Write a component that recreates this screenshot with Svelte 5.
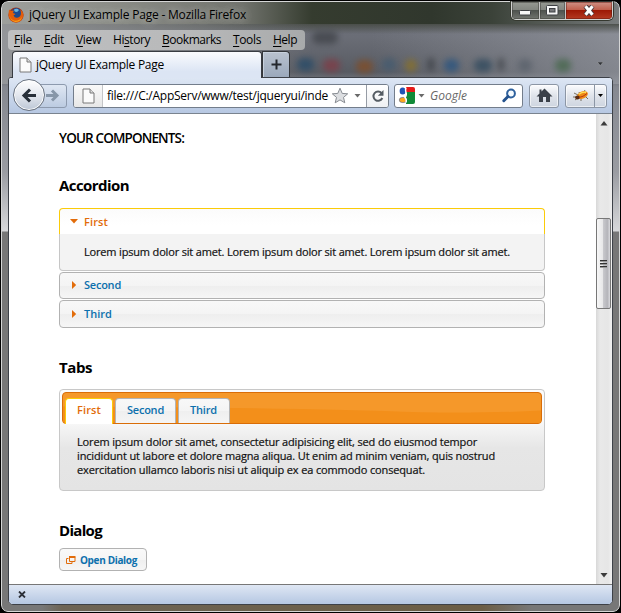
<script>
  function fit(node, width) {
    const n = node.textContent.length;
    node.style.letterSpacing = '0px';
    const natural = node.getBoundingClientRect().width;
    node.style.letterSpacing = `${(width - natural) / n}px`;
  }

  const menu = [
    ['F', 'ile', 18], ['E', 'dit', 20], ['V', 'iew', 25], ['Hi', 'story', 37],
    ['B', 'ookmarks', 59], ['T', 'ools', 28], ['H', 'elp', 24]
  ];
  const blobs = [
    [295, 63, 17, '#2c4c68'], [321, 64, 17, '#7c3f49'], [354, 65, 17, '#7d4e2c'],
    [380, 63, 14, '#465c70'], [403, 64, 12, '#86702f'], [426, 63, 6, '#3c4046'],
    [442, 64, 15, '#2f567f'], [472, 64, 18, '#364d60'], [496, 63, 6, '#44484e'],
    [516, 64, 14, '#5c636d'], [553, 64, 16, '#4b6951'], [310, 36, 26, '#44474d']
  ];
  const lines = [
    ['Lorem ipsum dolor sit amet, consectetur adipisicing elit, sed do eiusmod tempor', 400],
    ['incididunt ut labore et dolore magna aliqua. Ut enim ad minim veniam, quis nostrud', 418],
    ['exercitation ullamco laboris nisi ut aliquip ex ea commodo consequat.', 348]
  ];
  let open = 0;
</script>

<div class="window">
  <div class="glass">
    {#each blobs as [x, y, w, c]}
      <i class="blob" style="left:{x}px;top:{y - 7}px;width:{w}px;background:{c}"></i>
    {/each}
  </div>

  <header class="title">
    <svg class="fox" width="16" height="16" viewBox="0 0 16 16">
      <circle cx="8" cy="8" r="7.6" fill="#a93210" />
      <circle cx="8.4" cy="6.6" r="5.6" fill="#1d4b91" />
      <path d="M6 2.500q3-1.600 5 .4q-1 2-3 2q-2 0-2-2.400z" fill="#69b4e0" />
      <path d="M1 2.500L3 4q1.500-.7 3-.3L4.800 6q2 .3 2.600 1.300L5.500 8.500q1 2.500 3.600 2.200Q13 10 13 6L12.300 2.500Q16 5.500 15.300 9.500Q13.500 15.500 8 15.400Q1.500 15 .8 9Q.5 5.500 1 2.500z" fill="#e35d0b" />
      <path d="M1.500 8q1 4.500 5 5.700q5 .8 7.500-4.200q-1 5.500-6.500 5.400Q2 13.500 1.500 8z" fill="#f8a51b" />
    </svg>
    <span class="caption"><span use:fit={217}>jQuery UI Example Page - Mozilla Firefox</span></span>
    <div class="controls">
      <span class="ctl min"><svg width="12" height="6" viewBox="0 0 12 6"><rect x=".5" y=".5" width="11" height="4.500" rx="1" fill="#f6f6f6" stroke="#3e4044" /></svg></span>
      <span class="ctl max"><svg width="13" height="11" viewBox="0 0 13 11"><rect x=".5" y=".5" width="11.500" height="9.500" rx="1" fill="#f6f6f6" stroke="#3e4044" /><rect x="3.500" y="3.500" width="5.500" height="3.500" fill="#77787b" stroke="#3e4044" /></svg></span>
      <span class="ctl close"><svg width="14" height="11" viewBox="0 0 14 11"><path d="M3.500 1L10.500 10M10.500 1L3.500 10" stroke="#4b3a3e" stroke-width="5" /><path d="M3.500 1.200L10.500 9.800M10.500 1.200L3.500 9.800" stroke="#fff" stroke-width="3" /></svg></span>
    </div>
  </header>

  <nav class="menu">
    {#each menu as [a, b, w]}
      <span class="item" style="width:{w}px"><span use:fit={w}>{#if a.length > 1}{a}<u>{b[0]}</u>{b.slice(1)}{:else}<u>{a}</u>{b}{/if}</span></span>
    {/each}
  </nav>

  <div class="tabstrip">
    <div class="tab">
      <svg width="13" height="16" viewBox="0 0 13 16"><path d="M1 1h7l4 4v10H1z" fill="#fbfbfb" stroke="#797979" /><path d="M8 1v4h4" fill="#ddd" stroke="#797979" /></svg>
      <span use:fit={128}>jQuery UI Example Page</span>
    </div>
    <div class="plus"><svg width="11" height="11" viewBox="0 0 11 11"><path d="M5.500 .5v10M.5 5.500h10" stroke="#24282e" stroke-width="2" /></svg></div>
    <svg class="alltabs" width="7" height="4" viewBox="0 0 7 4"><path d="M.3 0h6L3.300 3.600z" fill="#303338" stroke="#aaa" stroke-width=".5" /></svg>
  </div>

  <div class="frame">
    <div class="toolbar">
      <div class="history">
        <div class="fwd"><svg width="14" height="13" viewBox="0 0 14 13"><path d="M0 6.500h10M6 1.500L11 6.500L6 11.500" fill="none" stroke="#8796a8" stroke-width="3" /></svg></div>
        <div class="back"><svg width="16" height="15" viewBox="0 0 16 15"><path d="M15 7.500H4M9 1.500L3 7.500L9 13.500" fill="none" stroke="#272f39" stroke-width="3.100" /></svg></div>
      </div>
      <div class="url">
        <div class="ident"><svg width="13" height="16" viewBox="0 0 13 16"><path d="M1 1h7l4 4v10H1z" fill="#fbfbfb" stroke="#797979" /><path d="M8 1v4h4" fill="#ddd" stroke="#797979" /></svg></div>
        <span class="addr"><span use:fit={221}>file:///C:/AppServ/www/test/jqueryui/inde</span></span>
        <svg class="star" width="18" height="17" viewBox="0 0 18 17"><path d="M9 1.200L11.200 6.400L16.700 6.800L12.500 10.400L13.800 15.800L9 12.900L4.200 15.800L5.500 10.400L1.300 6.800L6.800 6.400z" fill="#dcdee1" stroke="#888c92" /></svg>
        <svg class="dd" width="7" height="4" viewBox="0 0 7 4"><path d="M.5 0h6L3.500 3.500z" fill="#6a6a6a" /></svg>
        <div class="reload"><svg width="14" height="14" viewBox="0 0 14 14"><path d="M10.600 4.200A4.600 4.600 0 1 0 11.300 9" fill="none" stroke="#555c63" stroke-width="2" /><path d="M12.500 1v5.800H6.800z" fill="#555c63" /></svg></div>
      </div>
      <div class="search">
        <svg width="17" height="17" viewBox="0 0 17 17"><rect width="17" height="17" rx="2" fill="#fff" /><path d="M8 0h7q2 0 2 2v3H8z" fill="#e51a19" /><path d="M8 5h9v10q0 2-2 2H8z" fill="#118a38" /><path d="M0 7q5 1 8 7v3H0z" fill="#fff" /><ellipse cx="4.600" cy="4" rx="3" ry="3.500" fill="#2154b5" /><ellipse cx="5" cy="13" rx="3.800" ry="2.700" fill="#fba61e" stroke="#2b5bb5" stroke-width=".5" /><path d="M8 .5q-1 3 0 5t-1 5q2 2 1 5" stroke="#fff" stroke-width="1.500" fill="none" /></svg>
        <svg class="gdd" width="7" height="4" viewBox="0 0 7 4"><path d="M.5 0h6L3.500 3.500z" fill="#6a6a6a" /></svg>
        <span class="hint"><span use:fit={37}>Google</span></span>
        <svg width="15" height="15" viewBox="0 0 15 15"><circle cx="9" cy="5.500" r="3.900" fill="#f5fbff" stroke="#2f619d" stroke-width="2" /><path d="M6 8.500L1.800 12.800" stroke="#24528d" stroke-width="2.900" stroke-linecap="round" /></svg>
      </div>
      <div class="btn home"><svg width="17" height="15" viewBox="0 0 17 15"><path d="M8.500 .6L16.500 8.500H14V14H10V9H7V14H3V8.500H.5L3.500 5.500V1.500H5.500V3.500z" fill="#3a4049" /></svg></div>
      <div class="btn bug">
        <span class="half"><svg width="17" height="14" viewBox="0 0 17 14"><path d="M2 4L6 6M3 11L7 8M7 3l1 3M9 12V8M1 8h5M14 8l2 2M12 3l1-2" stroke="#4b391f" stroke-width=".7" /><ellipse cx="10.500" cy="6" rx="5.600" ry="3.500" transform="rotate(-24 10.500 6)" fill="#ee8a12" /><ellipse cx="5.500" cy="8.500" rx="2.400" ry="2" fill="#5b2c12" /><path d="M7 5.300q4-3 7-1.800" stroke="#fee05c" stroke-width="1.400" fill="none" /><path d="M7 8.500q4-.5 8-4" stroke="#b83616" fill="none" /></svg></span>
        <span class="arrow"><svg width="5" height="3" viewBox="0 0 5 3"><path d="M0 0h5L2.500 3z" fill="#000" /></svg></span>
      </div>
    </div>

    <div class="view">
      <main>
        <h2 class="top"><span use:fit={125}>YOUR COMPONENTS:</span></h2>
        <h3><span use:fit={70}>Accordion</span></h3>
        <div class="accordion">
          <div class="head active"><svg width="8" height="5" viewBox="0 0 8 5"><path d="M0 0h8L4 4.500z" fill="#e26c0a" /></svg><span use:fit={24}>First</span></div>
          {#if open === 0}
            <div class="body"><span use:fit={426}>Lorem ipsum dolor sit amet. Lorem ipsum dolor sit amet. Lorem ipsum dolor sit amet.</span></div>
          {/if}
          {#each [['Second', 37], ['Third', 28]] as [t, w]}
            <div class="head"><svg width="8" height="8" viewBox="0 0 8 8"><path d="M2 0v8L6.200 4z" fill="#e26c0a" /></svg><span use:fit={w}>{t}</span></div>
          {/each}
        </div>

        <h3 class="gap1"><span use:fit={33}>Tabs</span></h3>
        <div class="tabs">
          <div class="bar">
            <svg class="gloss" viewBox="0 0 478 31" preserveAspectRatio="none"><path d="M0 14Q230 15 358 20Q430 21 478 18V31H0z" fill="#f38f1a" /></svg>
            <span class="t on"><span use:fit={24}>First</span></span>
            <span class="t"><span use:fit={37}>Second</span></span>
            <span class="t"><span use:fit={27}>Third</span></span>
          </div>
          <div class="panel">
            {#each lines as [t, w]}<div><span use:fit={w}>{t}</span></div>{/each}
          </div>
        </div>

        <h3 class="gap2"><span use:fit={43}>Dialog</span></h3>
        <button>
          <svg width="10" height="8" viewBox="0 0 10 8"><path d="M2.500 2.500H.5v5H6V6" fill="none" stroke="#e26c0a" /><path d="M3.500 1.500h5.500v4H3.500z" fill="none" stroke="#e26c0a" /><path d="M3 0h6.500v2H3z" fill="#e26c0a" /></svg>
          <span use:fit={57}>Open Dialog</span>
        </button>
      </main>
      <div class="scroll">
        <svg class="up" width="8" height="5" viewBox="0 0 8 5"><path d="M4 0L7.500 4.500H.5z" fill="#3c3c3c" /></svg>
        <div class="thumb"><i></i><i></i><i></i></div>
        <svg class="down" width="8" height="5" viewBox="0 0 8 5"><path d="M.5 0h7L4 4.500z" fill="#3c3c3c" /></svg>
      </div>
    </div>

    <footer><svg width="8" height="7" viewBox="0 0 8 7"><path d="M1 .5L7 6.500M7 .5L1 6.500" stroke="#2c3038" stroke-width="1.800" /></svg></footer>
  </div>
</div>

<style>
  :global(body) { background: #000; overflow: hidden; }
  * { box-sizing: border-box; }
  svg { display: block; flex: none; }
  .window {
    position: relative; width: 621px; height: 613px; padding: 0 7px;
    border: 1px solid #000; border-radius: 8px 8px 7px 7px; overflow: hidden;
    font: 12px/16px "Open Sans", "Noto Sans", sans-serif; color: #000; white-space: nowrap;
    display: flex; flex-direction: column;
  }
  .glass {
    position: absolute; inset: 0; border: 1px solid #d5d6d6; border-radius: 7px; overflow: hidden;
    background:
      linear-gradient(90deg, #777 0 40px, #6d6455 60px, #6b5d45 480px, #777 530px) 0 603px / 100% 8px no-repeat,
      linear-gradient(90deg, rgba(160,162,158,.95) 0, rgba(138,140,132,.9) 130px, rgba(115,117,106,.75) 240px, rgba(50,57,43,.95) 310px, #30372d 430px, #3b4239 490px, #777b7c 100%) 0 0 / 100% 22px no-repeat,
      linear-gradient(90deg, rgba(150,152,155,.95), rgba(130,132,134,.6) 200px, rgba(80,83,90,0) 310px) 0 22px / 100% 60px no-repeat,
      linear-gradient(rgba(70,74,68,.9), rgba(70,74,68,0)) 0 22px / 100% 10px no-repeat,
      linear-gradient(90deg, transparent 370px, rgba(155,158,166,.65) 100%) 0 22px / 100% 60px no-repeat,
      linear-gradient(#6c6f78 20px, #6a6d76 35px, #585b62 70px, #858890 85px, #9a9ca2 170px, #d7d8da 229px, #777 230px);
  }
  .blob { position: absolute; height: 13px; border-radius: 6px; filter: blur(3px); opacity: .85; }
  .title { position: relative; height: 28px; display: flex; align-items: flex-start; flex: none; }
  .fox { margin-top: 6px; }
  .caption { margin: 6px 0 0 5px; width: 220px; text-shadow: 0 0 8px rgba(255,255,255,.35), 0 0 8px rgba(255,255,255,.35); }
  .controls { margin-left: auto; margin-right: 0; width: 102px; height: 19px; display: flex; border: 1px solid #d0d1d0; border-top-color: #30322f; border-radius: 0 0 5px 5px; overflow: hidden; box-shadow: 0 0 0 1px #35382f; }
  .ctl { display: flex; align-items: center; justify-content: center; width: 27px; border-right: 1px solid #c6c6c6; background: linear-gradient(#969992, #82857f 8px, #4c504c 8px, #71746f); box-shadow: inset 0 0 0 1px rgba(60,60,55,.5); }
  .min { width: 28px; }
  .min svg { margin-top: 5px; }
  .close { width: 46px; border: 0; background: linear-gradient(#cf9186, #c05e4b 8px, #9c1704 8px, #b43a22); box-shadow: inset 0 0 0 1px rgba(90,20,10,.45); }
  .menu { position: relative; width: 297px; height: 20px; margin: 1px 0 0; padding: 2px 6px; flex: none; display: flex; gap: 12px; border-radius: 4px; background: linear-gradient(90deg, #bfc0c1, #b8b9ba 60%, #a8aaab); }
  .item { flex: none; }
  u { text-decoration: underline; text-underline-offset: 2px; text-decoration-thickness: 1px; }
  .tabstrip { position: relative; height: 26px; margin-top: 1px; padding-left: 4px; display: flex; flex: none; }
  .tab { width: 250px; height: 27px; z-index: 1; margin-bottom: -1px; display: flex; align-items: center; gap: 4px; padding-left: 6px; border: 1px solid #393c42; border-bottom: 0; border-radius: 4px 4px 0 0; background: linear-gradient(#fafbfe, #dce5f4 75%); }
  .plus { width: 28px; border: 1px solid #33363a; border-bottom: 0; border-radius: 0 4px 0 0; background: linear-gradient(#b9c2cf, #9ba9bc); display: flex; align-items: center; justify-content: center; box-shadow: inset 1px 1px 0 #c8d1dd; }
  .alltabs { margin: 11px 9px 0 auto; }
  .frame { position: relative; width: 605px; height: 528px; flex: none; border: 1px solid #3d4148; border-radius: 3px 4px 5px 5px; overflow: hidden; display: flex; flex-direction: column; background: #fff; }
  .toolbar { height: 36px; flex: none; display: flex; align-items: center; padding: 0 4px; background: linear-gradient(#dde6f4, #b7c8e2); border-bottom: 1px solid #7a838f; }
  .history { position: relative; width: 54px; height: 33px; flex: none; display: flex; align-items: center; }
  .fwd { width: 40px; height: 24px; margin-left: 14px; padding: 0 6px; display: flex; align-items: center; justify-content: flex-end; border: 1px solid #8d9aae; border-radius: 3px; background: linear-gradient(#dfe7f3, #bccbe1); }
  .back { position: absolute; left: 0; top: 0; width: 32px; height: 32px; border-radius: 50%; border: 1px solid #69727f; background: linear-gradient(#fff, #e3e7ee 50%, #bdc7d6); box-shadow: inset 0 0 0 1px #fff; display: flex; align-items: center; justify-content: center; }
  .url { width: 316px; height: 24px; margin-left: 6px; flex: none; display: flex; align-items: center; border: 1px solid #737d8b; border-radius: 3px; background: #fff; overflow: hidden; }
  .ident { width: 29px; height: 100%; display: flex; align-items: center; justify-content: center; border-right: 1px solid #c5c6c8; background: linear-gradient(#f9f9f9, #e7e7e7); }
  .addr { width: 222px; margin-left: 4px; padding-top: 1px; }
  .star { margin-left: 2px; }
  .dd { margin-left: 5px; }
  .reload { width: 22px; height: 100%; margin-left: auto; border-left: 1px solid #969ca5; background: linear-gradient(#fff, #eef0f3); display: flex; align-items: center; justify-content: center; }
  .search { width: 129px; height: 24px; margin-left: 5px; padding-left: 3px; flex: none; display: flex; align-items: center; border: 1px solid #737d8b; border-radius: 3px; background: #fff; }
  .gdd { margin: 0 0 0 3px; }
  .hint { width: 72px; margin-left: 5px; padding-top: 1px; font-style: italic; color: #686868; }
  .btn { height: 24px; flex: none; display: flex; align-items: center; justify-content: center; border: 1px solid #8c96a5; border-radius: 3px; background: linear-gradient(#fbfcfe, #dfe3ea 50%, #ced5e0); box-shadow: inset 0 0 0 1px rgba(255,255,255,.6); }
  .home { width: 30px; margin-left: 6px; }
  .bug { width: 42px; margin-left: 6px; }
  .half { width: 29px; height: 22px; border-right: 1px solid #8c96a5; display: flex; align-items: center; justify-content: center; }
  .arrow { width: 11px; display: flex; justify-content: center; }
  .view { flex: 1; display: flex; min-height: 0; }
  main { width: 587px; padding: 15px 0 0 50px; font-size: 11px; line-height: 14px; }
  h2, h3 { margin: 0; height: 18px; line-height: 18px; font-weight: 600; }
  .top { font-size: 13.5px; }
  h3 { font-size: 15px; font-weight: 700; margin-top: 29px; }
  .accordion { width: 486px; margin-top: 14px; }
  .head { height: 27px; margin-bottom: 1px; padding: 0 0 1px 10px; display: flex; align-items: center; gap: 6px; border: 1px solid #b2b2b2; border-radius: 4px; color: #0c70ad; font-weight: 600; background: linear-gradient(#f8f8f8, #f4f4f4 50%, #eee 52%, #f6f6f6); }
  .head:last-child { height: 28px; margin-bottom: 0; }
  .active { height: 26px; margin: 0; padding-bottom: 0; border-color: #fbcb09; border-bottom: 0; border-radius: 4px 4px 0 0; color: #e26c0a; background: linear-gradient(#fbfbfb, #fff 65%); }
  .body { height: 37px; margin-bottom: 1px; padding: 11px 0 0 24px; border: 1px solid #c6c6c6; border-top: 0; border-radius: 0 0 4px 4px; background: #f3f3f3; color: #111; -webkit-text-stroke: .2px #111; }
  .gap1 { margin-top: 30px; }
  .tabs { width: 486px; height: 102px; margin-top: 13px; padding: 2px; border: 1px solid #c8c8c8; border-radius: 4px; background: linear-gradient(#fbfbfb 30px, #f5f5f5 36px, #e6e6e6 58px, #e4e4e4); color: #111; }
  .bar { position: relative; height: 32px; padding: 5px 2px 0; display: flex; gap: 2px; align-items: stretch; border: 1px solid #d96d08; border-radius: 4px; background: #f5982a; }
  .gloss { position: absolute; left: 0; top: 0; width: 100%; height: 100%; border-radius: 3px; }
  .t { position: relative; width: 61px; height: 25px; padding: 4px 11px 0; border: 1px solid #b4b4b4; border-bottom: 0; border-radius: 4px 4px 0 0; color: #0c70ad; font-weight: 600; background: linear-gradient(#f8f8f8, #f4f4f4 50%, #efefef 52%, #f5f5f5); }
  .t:last-child { width: 52px; }
  .on { width: 48px; height: 26px; border-color: #fbcb09; color: #e26c0a; background: #fff; }
  .panel { padding: 11px 0 0 15px; -webkit-text-stroke: .2px #111; }
  .gap2 { margin-top: 30px; }
  button { width: 88px; height: 23px; margin: 9px 0 0; padding: 0 0 0 6px; display: flex; align-items: center; gap: 4px; border: 1px solid #b2b2b2; border-radius: 4px; font: 700 10px/14px "Open Sans", "Noto Sans", sans-serif; color: #0c70ad; white-space: nowrap; background: linear-gradient(#f9f9f9, #f5f5f5 50%, #efefef 52%, #f6f6f6); }
  .scroll { width: 16px; display: flex; flex-direction: column; align-items: center; background: linear-gradient(90deg, #d8d8d8, #e9e9e9 4px, #e6e6e6 12px, #f0f0f0); }
  .up { margin-top: 7px; }
  .thumb { width: 15px; height: 91px; margin: 92px 1px 0 0; display: flex; flex-direction: column; align-items: center; justify-content: center; gap: 1px; border: 1px solid #777; border-radius: 2px; background: linear-gradient(90deg, #f7f7f7, #e7e7e8 45%, #c7c7cb 50%, #b5b5ba 80%, #dadade); }
  .thumb i { width: 7px; height: 2px; border-top: 1px solid #333; background: #999; }
  .down { margin: auto 0 6px; }
  footer { height: 20px; flex: none; display: flex; align-items: center; padding-left: 9px; border-top: 1px solid #777; background: linear-gradient(#dfe7f4, #b5c7e2); }
</style>
